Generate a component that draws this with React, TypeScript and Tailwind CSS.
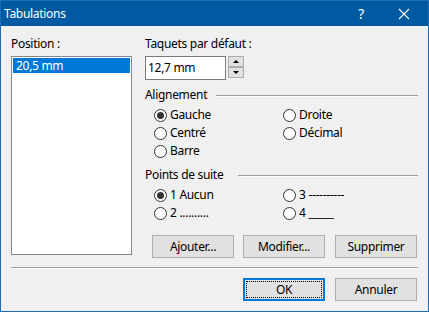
import React from "react";

function Radio({ label, checked }: { label: string; checked?: boolean }) {
  return (
    <div className="flex items-center h-[18px]">
      <div className="w-[13px] h-[13px] rounded-full border border-[#333333] bg-white flex items-center justify-center shrink-0">
        {checked && <div className="w-[7px] h-[7px] rounded-full bg-[#333333]" />}
      </div>
      <span className="ml-[3px] whitespace-pre">{label}</span>
    </div>
  );
}

function GroupHead({ label, gap }: { label: string; gap: string }) {
  return (
    <div className="flex items-start h-[16px]">
      <span className="leading-[16px]">{label}</span>
      <div className={`flex-1 mt-[8px] border-t border-t-[#a0a0a0] border-b border-b-white ${gap}`} />
    </div>
  );
}

function Btn({ label, cls = "" }: { label: string; cls?: string }) {
  return (
    <div
      className={`w-[82px] h-[23px] bg-[#e1e1e1] border border-[#adadad] flex items-center justify-center ${cls}`}
    >
      {label}
    </div>
  );
}

export default function App() {
  return (
    <div
      className="w-[429px] h-[312px] bg-[#f0f0f0] border border-[#1a6cb5] flex flex-col overflow-hidden text-[12px] text-black tracking-[-0.3px]"
      style={{ fontFamily: '"Noto Sans", "Open Sans", sans-serif' }}
    >
      <div className="h-[25px] bg-[#0059a1] flex items-center text-white pl-[3px] shrink-0">
        <span className="leading-[16px]">Tabulations</span>
        <span className="ml-auto mr-[34px] text-[14px] leading-[16px]">?</span>
        <svg width="12" height="12" viewBox="0 0 12 12" className="mr-[18px]">
          <path d="M1 1 L11 11 M11 1 L1 11" stroke="white" strokeWidth="1.1" />
        </svg>
      </div>
      <div className="flex-1 flex flex-col px-[10px]">
        <div className="flex pt-[10px]">
          <div className="w-[121px] flex flex-col">
            <div className="h-[16px] leading-[16px]">Position :</div>
            <div className="mt-[4px] h-[199px] border border-[#828790] bg-white p-[1px]">
              <div className="h-[15px] bg-[#0078d7] text-white leading-[15px] pl-[3px]">20,5 mm</div>
            </div>
          </div>
          <div className="ml-[13px] flex-1 flex flex-col">
            <div className="h-[16px] leading-[16px]">Taquets par défaut :</div>
            <div className="mt-[4px] flex items-start">
              <div className="w-[81px] h-[24px] border border-[#7a7a7a] bg-white flex items-center pl-[2px]">
                12,7 mm
              </div>
              <div className="ml-[2px] flex flex-col">
                <div className="w-[16px] h-[11px] bg-[#e1e1e1] border border-[#adadad] flex items-center justify-center">
                  <div className="w-0 h-0 border-l-[3px] border-r-[3px] border-b-[3px] border-l-transparent border-r-transparent border-b-black" />
                </div>
                <div className="w-[16px] h-[11px] bg-[#e1e1e1] border border-[#adadad] flex items-center justify-center">
                  <div className="w-0 h-0 border-l-[3px] border-r-[3px] border-t-[3px] border-l-transparent border-r-transparent border-t-black" />
                </div>
              </div>
            </div>
            <div className="mt-[7px]">
              <GroupHead label="Alignement" gap="ml-[9px]" />
            </div>
            <div className="mt-[3px] pl-[9px] grid grid-cols-[129px_1fr]">
              <Radio label="Gauche" checked />
              <Radio label="Droite" />
              <Radio label="Centré" />
              <Radio label="Décimal" />
              <Radio label="Barre" />
            </div>
            <div className="mt-[7px]">
              <GroupHead label="Points de suite" gap="ml-[15px]" />
            </div>
            <div className="mt-[3px] pl-[9px] grid grid-cols-[129px_1fr]">
              <Radio label="1 Aucun" checked />
              <Radio label="3 ----------" />
              <Radio label="2 .........." />
              <Radio label="4 _____" />
            </div>
            <div className="mt-[13px] flex">
              <Btn label="Ajouter..." cls="ml-[7px]" />
              <Btn label="Modifier..." cls="ml-[9px]" />
              <Btn label="Supprimer" cls="ml-[10px]" />
            </div>
          </div>
        </div>
        <div className="mt-[9px] border-t border-t-[#a0a0a0] border-b border-b-white" />
        <div className="mt-[9px] flex justify-end pr-[1px]">
          <div className="w-[82px] h-[23px] bg-[#e1e1e1] border-2 border-[#0078d7] p-[1px]">
            <div className="w-full h-full border border-dotted border-black flex items-center justify-center">
              OK
            </div>
          </div>
          <Btn label="Annuler" cls="ml-[10px]" />
        </div>
      </div>
    </div>
  );
}
